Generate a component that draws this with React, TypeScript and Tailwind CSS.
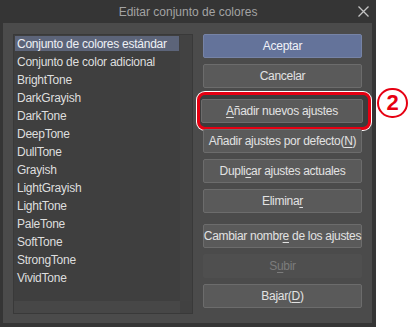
import React from "react";

const items = [
  "Conjunto de colores estándar",
  "Conjunto de color adicional",
  "BrightTone",
  "DarkGrayish",
  "DarkTone",
  "DeepTone",
  "DullTone",
  "Grayish",
  "LightGrayish",
  "LightTone",
  "PaleTone",
  "SoftTone",
  "StrongTone",
  "VividTone",
];

type Variant = "normal" | "primary" | "disabled";

const variantCls: Record<Variant, string> = {
  normal: "border-[#6c6c6c] bg-[#5a5a5a] text-[#e2e2e2]",
  primary: "border-[#7683a6] bg-[#64739a] text-[#f0f2f8]",
  disabled: "border-[#4f4f4f] bg-[#4f4f4f] text-[#7c7c7c]",
};

function Btn({
  children,
  className = "",
  variant = "normal",
}: {
  children: React.ReactNode;
  className?: string;
  variant?: Variant;
}) {
  return (
    <div
      className={
        "relative h-[24px] rounded-[2px] border flex items-center justify-center text-[12px] tracking-[-0.3px] whitespace-pre " +
        variantCls[variant] +
        " " +
        className
      }
    >
      <span>{children}</span>
    </div>
  );
}

function U({ children }: { children: React.ReactNode }) {
  return <span className="underline underline-offset-[2px] decoration-1">{children}</span>;
}

export default function App() {
  return (
    <div className="w-[417px] h-[327px] bg-white relative overflow-hidden font-['Liberation_Sans',Arial,sans-serif]">
      <div className="w-[376px] h-[327px] bg-[#353535] flex flex-col">
        <div className="h-[23px] relative flex items-center justify-center text-[12px] text-[#a3a3a3]">
          Editar conjunto de colores
          <svg
            className="absolute right-[7px] top-[6px]"
            width="11"
            height="11"
            viewBox="0 0 11 11"
          >
            <path d="M0.5 0.5 L10.5 10.5 M10.5 0.5 L0.5 10.5" stroke="#c4c4c4" strokeWidth="1.3" />
          </svg>
        </div>
        <div className="ml-[3px] mr-[4px] h-[300px] bg-[#4b4b4b] flex pt-[11px] pl-[10px]">
          {/* list */}
          <div className="w-[180px] h-[280px] border border-[#393939] bg-[#3f3f3f] flex flex-col">
            <div className="flex h-[266px]">
              <div className="w-[166px] flex flex-col text-[12px] tracking-[-0.25px] text-[#dedede]">
                {items.map((t, i) => (
                  <div key={t} className="h-[18px] flex">
                    <div
                      className={
                        "ml-[1px] mt-[1px] h-[15px] w-[164px] pl-[2px] flex items-center whitespace-nowrap " +
                        (i === 0 ? "bg-[#5c6479] text-[#eef0f5]" : "")
                      }
                    >
                      {t}
                    </div>
                  </div>
                ))}
              </div>
              <div className="w-[12px] bg-[#424242]" />
            </div>
            <div className="flex h-[12px]">
              <div className="w-[166px] bg-[#474747]" />
              <div className="w-[12px] bg-[#414141]" />
            </div>
          </div>
          {/* buttons */}
          <div className="ml-[10px] w-[159px] flex flex-col">
            <Btn variant="primary">Aceptar</Btn>
            <Btn className="mt-[6px]">Cancelar</Btn>
            <div className="relative mt-[11px]">
              <div className="absolute left-[-6px] right-[-9px] top-[-7px] bottom-[-7px] rounded-[8px] border-[3px] border-[#e60012] bg-[#3c3c3c] shadow-[0_0_0_1px_#ffffff]" />
              <Btn className="-ml-[2px] -mr-[1px]">
                <U>A</U>ñadir nuevos ajustes
              </Btn>
            </div>
            <Btn className="mt-[6px]">
              Añadir ajustes por defecto(<U>N</U>)
            </Btn>
            <Btn className="mt-[6px]">
              Dupli<U>c</U>ar ajustes actuales
            </Btn>
            <Btn className="mt-[6px]">
              Elimina<U>r</U>
            </Btn>
            <Btn className="mt-[11px]">
              Cambiar nombr<U>e</U> de los ajustes
            </Btn>
            <Btn className="mt-[6px]" variant="disabled">
              S<U>u</U>bir
            </Btn>
            <Btn className="mt-[6px]">
              Bajar(<U>D</U>)
            </Btn>
          </div>
        </div>
      </div>
      {/* annotation */}
      <div className="absolute left-[377px] top-[88px] w-[31px] h-[30px] rounded-full border-[2.5px] border-[#e60012] flex items-center justify-center text-[#e60012] text-[22px] font-bold leading-none">
        2
      </div>
    </div>
  );
}
